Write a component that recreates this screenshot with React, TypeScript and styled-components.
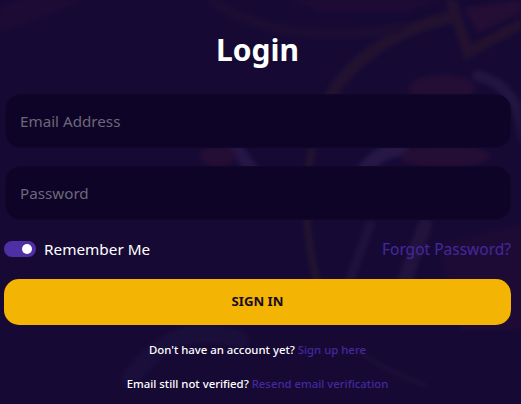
import React from "react";
import styled, { createGlobalStyle } from "styled-components";

const Global = createGlobalStyle`
  html, body { margin: 0; padding: 0; background: #160a35; }
  #root { width: 521px; height: 404px; overflow: hidden; }
  * { box-sizing: border-box; }
  input::placeholder { color: #6d6878; opacity: 1; }
`;

const Page = styled.main`
  position: relative;
  width: 521px;
  height: 404px;
  overflow: hidden;
  background: #160a35;
  font-family: "Noto Sans", "Open Sans", sans-serif;
`;

const Backdrop = styled.svg`
  position: absolute;
  inset: 0;
  width: 521px;
  height: 404px;
  filter: blur(2px);
  opacity: 0.8;
`;

const Form = styled.form`
  position: relative;
  display: flex;
  flex-direction: column;
  padding: 30px 10px 0 4px;
`;

const Title = styled.h1`
  margin: 0 0 25px;
  height: 39px;
  line-height: 39px;
  text-align: center;
  color: #fff;
  font-size: 30px;
  font-weight: 700;
`;

const Field = styled.input`
  display: block;
  width: 506px;
  height: 54px;
  margin: 0 0 18px 1px;
  padding: 0 14px;
  border: 1px solid #110829;
  border-radius: 15px;
  background: #0d0428;
  color: #fff;
  font: 400 15.2px "Noto Sans", sans-serif;
  outline: none;
`;

const OptionsRow = styled.div`
  display: flex;
  align-items: center;
  justify-content: space-between;
  width: 507px;
  height: 22px;
  margin: 0 0 19px;
`;

const RememberLabel = styled.label`
  display: flex;
  align-items: center;
  gap: 8px;
  color: #fff;
  font-size: 15.3px;
`;

const Toggle = styled.span`
  position: relative;
  display: block;
  width: 32px;
  height: 16px;
  border-radius: 8px;
  background: #4f2fa6;
`;

const Knob = styled.span`
  position: absolute;
  top: 3px;
  right: 4px;
  width: 10px;
  height: 10px;
  border-radius: 50%;
  background: #fff;
`;

const AccentLink = styled.a<{ $size: number }>`
  color: #44289e;
  font-size: ${(p) => p.$size}px;
  text-decoration: none;
`;

const SubmitButton = styled.button`
  width: 507px;
  height: 46px;
  margin-bottom: 16px;
  padding: 0 0 3px;
  border: 0;
  border-radius: 15px;
  background: #f3b403;
  color: #170b1f;
  font: 700 13.2px "Noto Sans", sans-serif;
`;

const Note = styled.p`
  margin: 0 0 17px;
  width: 507px;
  height: 17px;
  line-height: 17px;
  text-align: center;
  color: #fff;
  font-size: 11.35px;
  font-weight: 500;
`;

export default function App() {
  return (
    <Page>
      <Global />
      <Backdrop viewBox="0 0 521 404" aria-hidden="true">
        <g fill="none" strokeLinecap="round">
          <path d="M328 100 C350 60 395 30 448 18" stroke="#26142f" strokeWidth="12" />
          <path d="M312 150 C303 190 305 235 318 285" stroke="#27162f" strokeWidth="7" />
          <path d="M452 4 L468 52 L521 24" stroke="#27132e" strokeWidth="11" />
          <path d="M212 0 C255 32 325 42 400 28" stroke="#1e0e33" strokeWidth="10" />
          <path d="M478 76 C505 82 522 105 524 140" stroke="#261845" strokeWidth="11" />
          <path d="M236 148 L252 170" stroke="#28194a" strokeWidth="13" />
          <path d="M365 170 C380 150 395 150 402 148" stroke="#2a1b4a" strokeWidth="15" />
          <path d="M350 280 L370 225" stroke="#221440" strokeWidth="9" />
          <path d="M405 280 L425 225" stroke="#24163f" strokeWidth="14" />
          <path d="M360 352 C385 370 400 375 425 385" stroke="#1f1238" strokeWidth="4" />
          <path d="M130 380 C160 335 200 325 240 340" stroke="#1c103c" strokeWidth="18" />
        </g>
        <g fill="#290f35">
          <ellipse cx="442" cy="88" rx="33" ry="13" />
          <ellipse cx="445" cy="156" rx="45" ry="11" />
          <ellipse cx="218" cy="156" rx="18" ry="10" />
          <path d="M464 8 L521 0 V12 L478 33 Z" />
        </g>
        <g fill="#200c35">
          <path d="M290 0 H440 L405 12 H320 Z" />
          <path d="M0 32 L85 0 H20 L0 8 Z" />
          <path d="M440 245 L521 225 V330 L460 330 Z" />
        </g>
      </Backdrop>
      <Form>
        <Title>Login</Title>
        <Field placeholder="Email Address" type="email" />
        <Field placeholder="Password" type="password" />
        <OptionsRow>
          <RememberLabel>
            <Toggle>
              <Knob />
            </Toggle>
            Remember Me
          </RememberLabel>
          <AccentLink $size={15.5} href="#">Forgot Password?</AccentLink>
        </OptionsRow>
        <SubmitButton type="button">SIGN IN</SubmitButton>
        <Note>
          Don't have an account yet? <AccentLink $size={11.35} href="#">Sign up here</AccentLink>
        </Note>
        <Note>
          Email still not verified? <AccentLink $size={11.35} href="#">Resend email verification</AccentLink>
        </Note>
      </Form>
    </Page>
  );
}
